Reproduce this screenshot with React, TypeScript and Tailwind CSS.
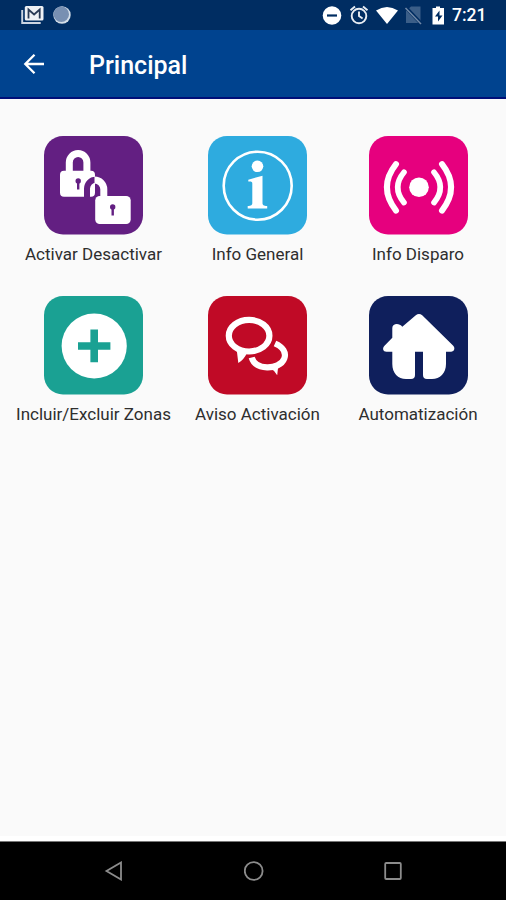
import type { ReactNode } from 'react';

interface MenuItem {
    label: string;
    color: string;
    icon: ReactNode;
}

const Keyhole: React.FC<{ x: number; y: number }> = ({ x, y }) => (
    <g transform={`translate(${x} ${y})`} fill="#631f82">
        <circle cy="-2.5" r="2.7" />
        <path d="M-1.2-1h2.4v7h-2.4z" />
    </g>
);

const LocksIcon = () => (
    <g fill="none">
        <path
            d="M25.3 37V26.5a8.8 9 0 0 1 17.6 0V37"
            stroke="#fff"
            strokeWidth="7"
        />
        <rect x="16" y="34.7" width="35" height="26" rx="4" fill="#fff" />
        <path
            d="M43 61V52.5a8.5 9 0 0 1 8.5-8.7"
            stroke="#631f82"
            strokeWidth="6"
        />
        <path
            d="M50.5 44a9.3 9.3 0 0 1 9.3 9.3V63"
            stroke="#fff"
            strokeWidth="7"
        />
        <rect x="51.2" y="60" width="35.5" height="28" rx="4.5" fill="#fff" />
        <Keyhole x={34.2} y={47.5} />
        <Keyhole x={68.7} y={73.5} />
    </g>
);

const InfoIcon = () => (
    <g fill="#fff">
        <circle
            cx="49.7"
            cy="49.7"
            r="34"
            fill="none"
            stroke="#fff"
            strokeWidth="2.6"
        />
        <circle cx="49.5" cy="30.3" r="5.8" />
        <path d="M54.5 39.7V67c0 2 1 2.8 4.7 3v2.5H39.7V70c3.6-.2 4.6-1 4.6-3V47.5c0-1.8-1-2.2-4-2v-1.8z" />
    </g>
);

const SignalIcon = () => (
    <g fill="none" stroke="#fff" strokeLinecap="round">
        <circle cx="50" cy="51.3" r="9.8" fill="#fff" stroke="none" />
        <path
            d="M35 36.2Q22.4 51.3 35 66.6M65 36.2Q77.6 51.3 65 66.6"
            strokeWidth="5.6"
        />
        <path
            d="M27 28.2Q8.8 51.3 27 74.6M73 28.2Q91.2 51.3 73 74.6"
            strokeWidth="6"
        />
    </g>
);

const PlusIcon = () => (
    <g>
        <circle cx="50.2" cy="50" r="32.6" fill="#fff" />
        <path d="M50.2 33.6v32.6M34 50h32.4" stroke="#1aa193" strokeWidth="7.6" />
    </g>
);

const ChatIcon = () => (
    <g fill="none" stroke="#fff" strokeWidth="6.2">
        <ellipse cx="41.1" cy="39.7" rx="20.3" ry="15.8" />
        <path d="M67 47.5c8 3.5 11.5 9 9.3 15C74 69 66 71.5 59 71.3 51 71 45.5 68 43.7 61.5" />
        <path
            d="M28.5 52l1.8 15q5.5-3 9.2-11zM62 72q4 2 7.2 7.2L70.5 68z"
            fill="#fff"
            stroke="none"
        />
    </g>
);

const HouseIcon = () => (
    <path
        d="M46.8 19.3q3.2-2.8 6.4 0L84 49.5c2.6 2.6 1.3 6.2-2 6.2h-5V68c0 9-6 15-14 15h-5q-4 0-4-4V55.7h-8V79q0 4-4 4h-5C29 83 23.3 77 23.3 68V55.7h-5.8c-3.5 0-4.5-3.4-2-6l7.8-8V32c0-4.7 7-5.2 10-1.2z"
        fill="#fff"
    />
);

const items: MenuItem[] = [
    { label: 'Activar Desactivar', color: '#631f82', icon: <LocksIcon /> },
    { label: 'Info General', color: '#2eabdf', icon: <InfoIcon /> },
    { label: 'Info Disparo', color: '#e6007e', icon: <SignalIcon /> },
    { label: 'Incluir/Excluir Zonas', color: '#1aa193', icon: <PlusIcon /> },
    { label: 'Aviso Activación', color: '#c00a26', icon: <ChatIcon /> },
    { label: 'Automatización', color: '#0f1f5c', icon: <HouseIcon /> },
];

const StatusBar: React.FC = () => (
    <div className="flex h-[30px] items-center justify-between bg-[#002d62] pl-[21px] pr-[20px] text-white">
        <div className="flex items-center gap-[9px]">
            <svg width="23" height="20" viewBox="0 0 23 20">
                <path d="M1.2 5v13h18.5" fill="none" stroke="#ccd5e2" strokeWidth="1.9" />
                <rect x="3.8" y="1" width="18.7" height="14.5" rx="1.5" fill="#eef1f5" />
                <path
                    d="M7.5 13.5V4.5l5.6 5 5.6-5v9"
                    fill="none"
                    stroke="#293a55"
                    strokeWidth="1.8"
                />
            </svg>
            <svg width="18" height="18" viewBox="0 0 18 18">
                <circle cx="9" cy="9" r="8.7" fill="#d5dfe9" />
                <circle cx="8.3" cy="8.2" r="7.7" fill="#7890b2" />
            </svg>
        </div>
        <div className="flex items-center">
            <svg width="130" height="22" viewBox="322 4 130 22">
                <circle cx="332" cy="15.5" r="9.3" fill="#fff" />
                <path d="M327 15.5h10" stroke="#002d62" strokeWidth="2.2" />
                <g fill="none" stroke="#e8edf3" strokeWidth="1.9">
                    <circle cx="359" cy="16" r="7.3" />
                    <path d="M350.5 10.3l4.500-3.8M367.5 10.3L363 6.5M359 11.5V16l3.6 2.5" />
                </g>
                <path d="M376 10.5q11-7 22 0L387 24z" fill="#fff" />
                <path d="M406 11l5-4.5h9.5V23H406z" fill="#3b5e88" />
                <path d="M405.5 7l16 17" stroke="#002d62" strokeWidth="3.5" />
                <path d="M405.5 8l15.5 16" stroke="#7189a7" strokeWidth="1.5" />
                <path d="M436 6.5h4V8h4v16.5h-11.500V8h3.5z" fill="#fff" />
                <path d="M439.5 10.5l-4.5 6h3v5l4.5-6h-3z" fill="#002d62" />
            </svg>
            <span className="w-[34px] whitespace-nowrap pt-px text-right text-[17.5px] font-medium leading-[29px]">
                7:21
            </span>
        </div>
    </div>
);

const Header: React.FC = () => (
    <header className="flex h-[69px] items-center border-b-2 border-[#000f78] bg-[#00438f] pl-[23px] text-white">
        <svg width="23" height="22" viewBox="0 0 23 22" fill="none" stroke="#fff" strokeWidth="2.3">
            <path d="M21 11H2.5M11.5 1.8L2.3 11l9.2 9.2" />
        </svg>
        <h1 className="ml-[43px] pt-[3px] text-[25px] font-medium leading-none">Principal</h1>
    </header>
);

const MenuTile: React.FC<{ item: MenuItem }> = ({ item }) => (
    <div className="flex flex-col items-center">
        <svg width="99" height="99" viewBox="0 0 99 99">
            <rect width="99" height="98.5" rx="19" fill={item.color} />
            {item.icon}
        </svg>
        <span className="mt-[8px] whitespace-nowrap text-[17px] leading-[22px] text-[#2e2e2e]">
            {item.label}
        </span>
    </div>
);

const NavBar: React.FC = () => (
    <nav className="flex h-[59px] items-center justify-between border-t border-[#777] bg-black pl-[104px] pr-[103px]">
        <svg width="20" height="20" viewBox="0 0 20 20" fill="none" stroke="#8c8c8c" strokeWidth="1.8">
            <path d="M17 1.5v17L2.5 10z" />
        </svg>
        <svg width="20" height="20" viewBox="0 0 20 20" fill="none" stroke="#8c8c8c" strokeWidth="1.8">
            <circle cx="9.7" cy="10" r="8.9" />
        </svg>
        <svg width="20" height="20" viewBox="0 0 20 20" fill="none" stroke="#8c8c8c" strokeWidth="1.8">
            <rect x="2.2" y="2" width="15.6" height="16" rx="1" />
        </svg>
    </nav>
);

const App: React.FC = () => {
    return (
        <div className="flex h-[900px] w-[506px] flex-col overflow-hidden bg-[#fafafa] font-['Roboto',sans-serif]">
            <StatusBar />
            <Header />
            <main className="flex-1 pl-[11.5px] pt-[37px]">
                <div className="grid grid-cols-[164px_164px_157px] gap-y-[31px]">
                    {items.map((item) => (
                        <MenuTile key={item.label} item={item} />
                    ))}
                </div>
            </main>
            <div className="h-[5px] bg-white" />
            <NavBar />
        </div>
    );
};

export default App;
